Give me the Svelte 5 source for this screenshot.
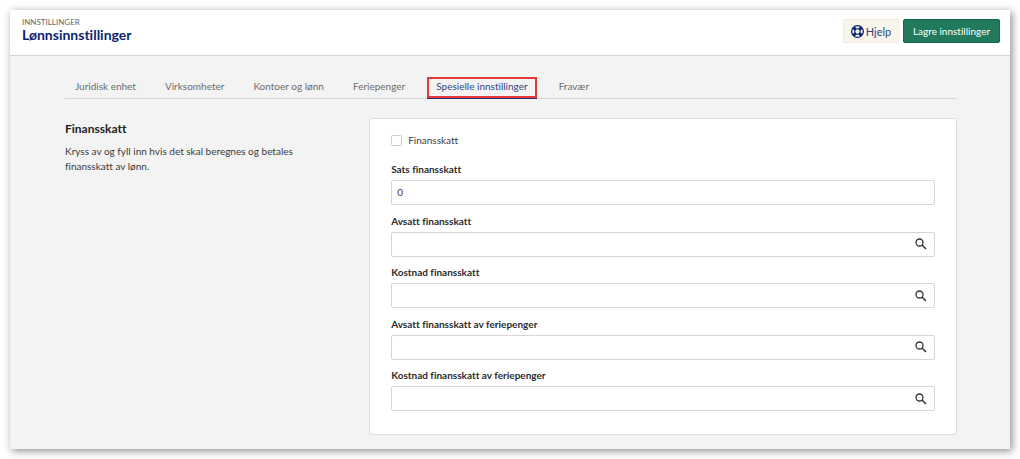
<script>
  const tabs = ['Juridisk enhet', 'Virksomheter', 'Kontoer og lønn', 'Feriepenger', 'Spesielle innstillinger', 'Fravær'];
  let active = $state('Spesielle innstillinger');
  let enabled = $state(false);
  const fields = $state([
    { id: 'sats', label: 'Sats finansskatt', value: '0', search: false },
    { id: 'avsatt', label: 'Avsatt finansskatt', value: '', search: true },
    { id: 'kostnad', label: 'Kostnad finansskatt', value: '', search: true },
    { id: 'avsatt-ferie', label: 'Avsatt finansskatt av feriepenger', value: '', search: true },
    { id: 'kostnad-ferie', label: 'Kostnad finansskatt av feriepenger', value: '', search: true }
  ]);
</script>

<div class="page">
  <div class="window">
    <header>
      <div class="heading">
        <span class="crumb">INNSTILLINGER</span>
        <h1>Lønnsinnstillinger</h1>
      </div>
      <div class="actions">
        <button class="help" type="button">
          <svg viewBox="0 0 24 24" aria-hidden="true">
            <circle cx="12" cy="12" r="10.800" fill="#f8f5ea" stroke="#0b2472" stroke-width="2.400" />
            <path d="M4.500 4.500l4 4M19.500 4.500l-4 4M4.500 19.500l4-4M19.500 19.500l-4-4" stroke="#0b2472" stroke-width="5.500" />
            <circle cx="12" cy="12" r="5" fill="#f8f5ea" stroke="#0b2472" stroke-width="2" />
          </svg>
          Hjelp
        </button>
        <button class="save" type="button">Lagre innstillinger</button>
      </div>
    </header>

    <main>
      <nav>
        {#each tabs as tab}
          <button type="button" class="tab" class:active={tab === active} onclick={() => (active = tab)}>{tab}</button>
        {/each}
      </nav>

      <div class="columns">
        <section class="intro">
          <h2>Finansskatt</h2>
          <p>Kryss av og fyll inn hvis det skal beregnes og betales finansskatt av lønn.</p>
        </section>

        <form class="card">
          <label class="check">
            <input type="checkbox" bind:checked={enabled} />
            Finansskatt
          </label>
          <div class="fields">
            {#each fields as field}
              <div class="field">
                <label for={field.id}>{field.label}</label>
                <div class="control">
                  <input id={field.id} type="text" bind:value={field.value} />
                  {#if field.search}
                    <button type="button" aria-label="Søk">
                      <svg viewBox="0 0 24 24" aria-hidden="true">
                        <circle cx="9" cy="9" r="7" fill="none" stroke="#333" stroke-width="2.600" />
                        <path d="M14 14l8 8" stroke="#333" stroke-width="3.200" />
                      </svg>
                    </button>
                  {/if}
                </div>
              </div>
            {/each}
          </div>
        </form>
      </div>
    </main>
  </div>
</div>

<style>
  :global(body) {
    margin: 0;
    background: #fff;
  }
  .page, .page * {
    box-sizing: border-box;
  }
  .page {
    display: flex;
    min-height: 100vh;
    padding: 10px;
    font-family: Lato, "Open Sans", sans-serif;
    font-variant-ligatures: none;
    font-size: 10px;
    line-height: 15px;
    color: #3c3c3c;
  }
  button, input {
    font: inherit;
    font-variant-ligatures: none;
    color: inherit;
    margin: 0;
  }
  button {
    cursor: pointer;
  }
  .window {
    flex: 1;
    display: flex;
    flex-direction: column;
    background: #f3f3f3;
    box-shadow: 2px 2px 8px rgba(0, 0, 0, 0.45);
  }
  header {
    display: flex;
    justify-content: space-between;
    align-items: flex-start;
    height: 46px;
    padding: 8px 10px 0 12px;
    background: #fff;
    border-bottom: 1px solid #d6d6d6;
  }
  .heading {
    display: flex;
    flex-direction: column;
  }
  .crumb {
    font-size: 8px;
    line-height: 8px;
    color: #666;
  }
  h1 {
    margin: 0;
    font-size: 14px;
    line-height: 18px;
    font-weight: 700;
    color: #0b2472;
  }
  .actions {
    display: flex;
    gap: 4px;
    padding-top: 1px;
  }
  .actions button {
    display: flex;
    align-items: center;
    justify-content: center;
    height: 24px;
    padding: 0 6px;
    border-radius: 2px;
    white-space: nowrap;
  }
  .actions .help {
    gap: 2px;
    min-width: 56px;
    background: #f8f5ea;
    border: 1px solid #f4eadb;
    color: #34457f;
    font-size: 11px;
  }
  .help svg {
    width: 13px;
    height: 13px;
  }
  .actions .save {
    min-width: 97px;
    background: #217a5b;
    border: 1px solid #0f6848;
    color: #fff;
  }
  main {
    flex: 1;
    display: flex;
    flex-direction: column;
    padding: 21px 53px 14px 55px;
  }
  nav {
    display: flex;
    gap: 11px;
    padding: 0 1px;
    border-bottom: 1px solid #d6d6d6;
  }
  .tab {
    height: 21px;
    padding: 0 7px 2px;
    border: 2px solid transparent;
    background: none;
    color: #6c6c6c;
    white-space: nowrap;
  }
  .tab.active {
    margin: 0 2px;
    border-color: #e53935;
    color: #34457f;
    box-shadow: 0 1px #2b2a7c;
  }
  .columns {
    flex: 1;
    display: grid;
    grid-template-columns: 341fr 659fr;
    padding-top: 19px;
  }
  .intro {
    padding-right: 56px;
  }
  h2 {
    margin: 3px 0 7px;
    font-size: 12px;
    line-height: 16px;
    font-weight: 700;
    color: #222;
  }
  p {
    margin: 0;
  }
  .card {
    display: flex;
    flex-direction: column;
    padding: 14px 21px 23px;
    background: #fff;
    border: 1px solid #dcdcdc;
    border-radius: 3px;
  }
  .check {
    display: flex;
    align-items: center;
    gap: 6px;
    margin-bottom: 14px;
  }
  .check input {
    appearance: none;
    width: 11px;
    height: 11px;
    border: 1px solid #cfcfcf;
    border-radius: 2px;
    background: #fff;
  }
  .check input:checked {
    background: #217a5b;
  }
  .fields {
    flex: 1;
    display: flex;
    flex-direction: column;
    justify-content: space-between;
  }
  .field {
    display: flex;
    flex-direction: column;
    gap: 3px;
  }
  .field label {
    font-weight: 700;
    color: #2b2b2b;
  }
  .control {
    display: flex;
    height: 25px;
    border: 1px solid #d6d6d6;
    border-radius: 2px;
  }
  .control input {
    flex: 1;
    min-width: 0;
    padding: 0 5px;
    border: 0;
    background: none;
    outline: none;
  }
  .control button {
    display: flex;
    align-items: center;
    padding: 0 7px;
    border: 0;
    background: none;
  }
  .control svg {
    width: 12px;
    height: 12px;
  }
</style>
